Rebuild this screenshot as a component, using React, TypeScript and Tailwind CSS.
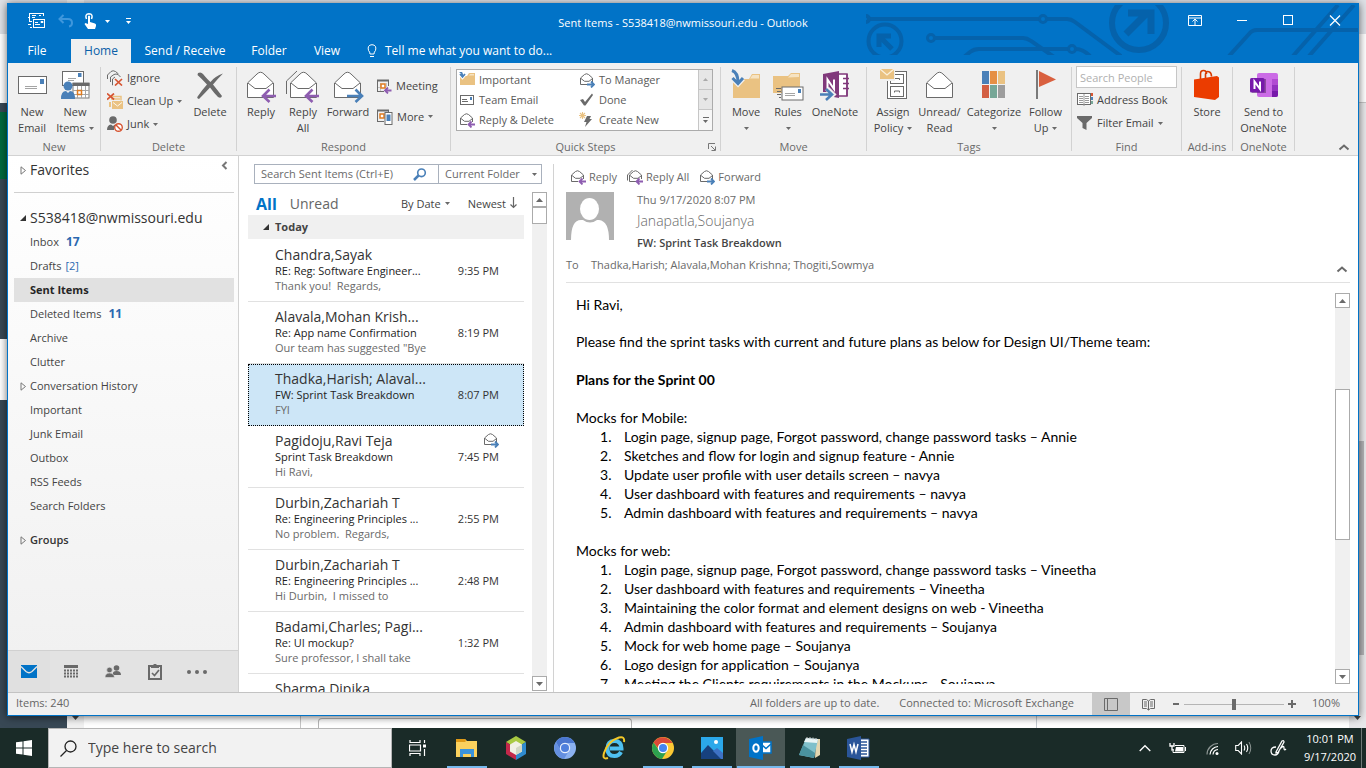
import React, { useState } from "react";

const CHAR = "#6a6a6a";
const BLUE = "#4a80b8";
const PURPLE = "#8e5db0";
const SAND = "#eac282";
const RED = "#d65532";

type IconProps = { w: number; h: number; className?: string; children: React.ReactNode };

function Icon({ w, h, className = "", children }: IconProps) {
  return (
    <svg width={w} height={h} viewBox={`0 0 ${w} ${h}`} fill="none" aria-hidden="true" className={`shrink-0 ${className}`}>
      {children}
    </svg>
  );
}

function Caret({ color = "#6a6a6a" }: { color?: string }) {
  return (
    <Icon w={5} h={3}>
      <path d="M0 0h5L2.500 3z" fill={color} />
    </Icon>
  );
}

/* ---------- large ribbon icons ---------- */

const envelopeShape = (
  <>
    <path d="M2.500 14 12 5q3.500-3.500 7 0l9.500 9v14.500h-26z" fill="#fff" stroke={CHAR} />
    <path d="m3 14 7 5.500h11l7-5.500" stroke={CHAR} />
  </>
);

const bigPurpleArrow = (
  <path d="M31 27H19M24.500 20.500 18 27l6.500 6" stroke={PURPLE} strokeWidth="2.600" />
);

function NewEmailIcon() {
  return (
    <Icon w={30} h={32}>
      <rect x="1.500" y="7.500" width="28" height="17" fill="#fff" stroke={CHAR} />
      <rect x="23" y="10" width="4" height="5" fill={BLUE} />
      <path d="M8 17.500h12M8 19.500h12" stroke="#a5a5a5" />
    </Icon>
  );
}

function NewItemsIcon() {
  return (
    <Icon w={30} h={32}>
      <rect x="2.500" y="2.500" width="21" height="14" fill="#fff" stroke={CHAR} />
      <rect x="18" y="4" width="3.500" height="4" fill={BLUE} />
      <path d="M8 9.500h8M8 11.500h6" stroke="#a5a5a5" />
      <rect x="13" y="14" width="16" height="15" fill="#fff" stroke="#7a7a7a" />
      <path d="M12.500 15.500h17" stroke={CHAR} strokeWidth="3" />
      <path d="M13 21.500h16M13 25.500h16M17.500 17v12M21.500 17v12M25.500 17v12" stroke="#a5a5a5" />
      <rect x="17.500" y="21.500" width="4" height="4" fill="#fff" stroke="#e07b1f" strokeWidth="1.500" />
      <circle cx="8" cy="17" r="4.500" fill={BLUE} />
      <path d="M1 30q0-8 5-8l2 2 2-2q5 0 5 8z" fill={BLUE} />
    </Icon>
  );
}

function DeleteIcon() {
  return (
    <Icon w={30} h={32}>
      <path d="M3 4q3-1.500 5 1 5 6 7.500 8Q20 7 28 4.500q-5 5-10 11 4 5 9 11.500-1 3-4 1-4-4-8-9.500Q10 24 4 30q-3-1-1-3 4-6 9-11.500Q7 10 2.500 6z" fill={CHAR} />
    </Icon>
  );
}

function ReplyIcon() {
  return (
    <Icon w={32} h={34}>
      {envelopeShape}
      {bigPurpleArrow}
    </Icon>
  );
}

function ReplyAllIcon() {
  return (
    <Icon w={34} h={34}>
      <path d="M.5 25V12L11 2" stroke={CHAR} />
      <g transform="translate(2 0)">
        {envelopeShape}
        {bigPurpleArrow}
      </g>
    </Icon>
  );
}

function ForwardIcon() {
  return (
    <Icon w={32} h={34}>
      {envelopeShape}
      <path d="M15 27h13M23.500 20.500 30 27l-6.500 6" stroke={BLUE} strokeWidth="2.600" />
    </Icon>
  );
}

function MoveIcon() {
  return (
    <Icon w={32} h={34}>
      <path d="M3 10h16l3-5h8v24H3z" fill={SAND} />
      <path d="M20 9.500 22.500 6H29v3.500z" fill="#f6e3c2" />
      <path d="M2 1q7 1 6 12M2.500 9.500 8 15l5-5.500" stroke="#f0f0f0" strokeWidth="5" />
      <path d="M2 1.500q6 2 6 12M2.500 9 8 14.500 13 9" stroke={BLUE} strokeWidth="3" />
    </Icon>
  );
}

function RulesIcon() {
  return (
    <Icon w={32} h={34}>
      <path d="M1 7h15l3-3h9v20H1z" fill={SAND} />
      <path d="M16 8.500 19 5h8v3z" fill="#f6e3c2" />
      <path d="M4 19.500h5M5 22.500h4M5 25.500h4M7 28.500h2" stroke={CHAR} />
      <rect x="10" y="18" width="21" height="13" fill="#fff" stroke={CHAR} />
      <rect x="26" y="20" width="3" height="4" fill={BLUE} />
      <path d="M13 24.500h10M13 26.500h10" stroke="#a5a5a5" />
    </Icon>
  );
}

function OneNoteIcon() {
  return (
    <Icon w={32} h={34}>
      <rect x="17" y="5" width="11" height="22" fill="#fff" stroke="#80397b" strokeWidth="1.500" />
      <path d="M24 9.500h6M24 14.500h6M24 19.500h6M28 5v22" stroke="#80397b" strokeWidth="1.500" />
      <path d="M4 5 20 2v27L4 26z" fill="#80397b" />
      <path d="M8.500 20v-9.500L15 20v-9.500" stroke="#fff" strokeWidth="2" />
      <path d="M1 25.500h12M8 19.500l6 6-6 5.500" stroke="#f0f0f0" strokeWidth="5" />
      <path d="M1 25.500h11M7 20l6 5.500L7 31" stroke={BLUE} strokeWidth="2.600" />
    </Icon>
  );
}

function AssignIcon() {
  return (
    <Icon w={32} h={34}>
      <rect x="10.500" y="2.500" width="19" height="27" fill="#fff" stroke={CHAR} />
      <rect x="13.500" y="5.500" width="13" height="9" stroke={CHAR} />
      <rect x="13.500" y="17.500" width="13" height="10" stroke={CHAR} />
      <path d="M17.500 11V9.500h5V11M17.500 23.500V22h5v1.500" stroke={CHAR} />
      <path d="M3 0h15v12H3z" fill="#f0f0f0" />
      <path d="M3 0h14v10H3z" fill={SAND} />
      <path d="m3 0 7 6 7-6" stroke="#fbf0dc" strokeWidth="1.300" />
    </Icon>
  );
}

function UnreadIcon() {
  return (
    <Icon w={32} h={32}>
      {envelopeShape}
    </Icon>
  );
}

function CategorizeIcon() {
  return (
    <Icon w={26} h={32}>
      <path d="M1 2h7v13H1z" fill={BLUE} />
      <path d="M9 2h7v13H9z" fill="#e58f44" />
      <path d="M17 2h7v13h-7z" fill={SAND} />
      <path d="M1 16h7v13H1z" fill="#d35f43" />
      <path d="M9 16h7v13H9z" fill="#76a797" />
      <path d="M17 16h7v13h-7z" fill="#9d9d9d" />
    </Icon>
  );
}

function FollowIcon() {
  return (
    <Icon w={22} h={32}>
      <path d="M2 1v29" stroke="#7a7a7a" strokeWidth="2" />
      <path d="m4 2 17 8.500L4 18z" fill="#d9603f" />
    </Icon>
  );
}

function StoreIcon() {
  return (
    <Icon w={28} h={34}>
      <path d="M7.500 11V5q0-3.500 3-3.500t3 3.500M12.500 9V5q1-3.500 4-2 2 1 2 4.500" stroke="#d83b01" strokeWidth="1.600" />
      <path d="M1 10.500 24 7l2 1.500V28l-4 3L1 28z" fill="#eb3c00" />
    </Icon>
  );
}

function SendOneNoteIcon() {
  return (
    <Icon w={32} h={34}>
      <rect x="9" y="4" width="21" height="24" rx="2" fill="#cb6be6" />
      <path d="M24 10h6v6h-6z" fill="#b14bd2" />
      <path d="M24 16h6v6h-6z" fill="#9332bf" />
      <path d="M24 22h6v4q0 2-2 2h-4z" fill="#7719aa" />
      <rect x="4" y="10" width="14" height="14" fill="#000" opacity=".3" />
      <rect x="2" y="9" width="14.500" height="14.500" rx="1.500" fill="#7719aa" />
      <path d="M6.500 20v-7.500l5.500 7.500v-7.500" stroke="#fff" strokeWidth="2" />
    </Icon>
  );
}

/* ---------- small icons ---------- */

function SmallEnvelope({ arrow, all = false }: { arrow: "reply" | "forward"; all?: boolean }) {
  return (
    <Icon w={16} h={16}>
      {all && <path d="M.5 11.500V6L5.500 1" stroke={CHAR} />}
      <path d="M8 12.500H1.500V6L5.500 2.500q2-1.500 4 0l4 3.500v4" stroke={CHAR} transform={all ? "translate(1 0)" : undefined} />
      <path d="m2 6.500 3.500 2.800h4.500l3.500-2.800" stroke={CHAR} transform={all ? "translate(1 0)" : undefined} />
      {arrow === "reply" ? (
        <path d="M16 12.500H9.500M12.500 9.500l-3 3 3 3" stroke={PURPLE} strokeWidth="1.800" />
      ) : (
        <path d="M8 12.500h7M12 9.500l3 3-3 3" stroke={BLUE} strokeWidth="1.800" />
      )}
    </Icon>
  );
}

function IgnoreIcon() {
  return (
    <Icon w={16} h={16}>
      <path d="M.5 9V5L4 1.500q2-1.500 4.500 0l3 2.500M3.500 12V7L7 4.500q2-1 4 0L13.500 7M6 15H5.500V9L8 7" stroke={CHAR} />
      <path d="m8 9 7 6.500M15 9l-7 6.500" stroke={RED} strokeWidth="1.700" />
    </Icon>
  );
}

function CleanUpIcon() {
  return (
    <Icon w={16} h={16}>
      <path d="M4 3.500h10v4M4 6h9" stroke={SAND} strokeWidth="1.500" />
      <path d="M5 8h11v8H5zM2 9h2v5H2z" fill={SAND} />
      <path d="m6 9.500 4.500 3.500L15 9.500" stroke="#fff8ea" />
      <path d="m0 .5 7 6M7 .5l-7 6" stroke={RED} strokeWidth="1.700" />
    </Icon>
  );
}

function JunkIcon() {
  return (
    <Icon w={16} h={16}>
      <circle cx="6" cy="4" r="3.800" fill={CHAR} />
      <path d="M0 14q0-5 4-5.500L6 10l2-1.500q1 0 2 1-3 1.500-3 4.500z" fill={CHAR} />
      <circle cx="11.500" cy="11.500" r="3.800" fill="#fff" stroke={RED} strokeWidth="1.400" />
      <path d="m9 9 5 5" stroke={RED} strokeWidth="1.400" />
    </Icon>
  );
}

function MeetingIcon() {
  return (
    <Icon w={16} h={16}>
      <path d="M1.500 2v11M12.500 2v6M1 13.500h7" stroke={CHAR} />
      <path d="M1 2.500h12" stroke={CHAR} strokeWidth="2" />
      <path d="M4.500 5v8M10.500 5v4M2 9.500h8" stroke="#c4c4c4" />
      <rect x="5" y="6" width="4" height="4" fill="#fff" stroke="#e07b1f" strokeWidth="1.500" />
      <path d="M15.500 12.500H9.500M12 9.500l-3 3 3 3" stroke={PURPLE} strokeWidth="1.800" />
    </Icon>
  );
}

function MoreIcon() {
  return (
    <Icon w={17} h={17}>
      <path d="M1.500 2v11M12.500 2v2M1 13.500h7" stroke={CHAR} />
      <path d="M1 2.500h12" stroke={CHAR} strokeWidth="2" />
      <rect x="4" y="6" width="4" height="4" fill="#fff" stroke="#e07b1f" strokeWidth="1.500" />
      <rect x="9" y="4.500" width="7" height="12" fill="#fff" stroke={CHAR} />
      <path d="M10.500 6.500h4V13h-4z" fill={BLUE} />
    </Icon>
  );
}

function FolderMoveIcon() {
  return (
    <Icon w={16} h={16}>
      <path d="M1 4h7l2-3h6v12H1z" fill={SAND} />
      <path d="M10 3.500 11 2h4v1.500z" fill="#f6e3c2" />
      <path d="M.5 0q3 0 3 5M1 2.500l2.500 3L6 2.500" stroke="#fff" strokeWidth="3" />
      <path d="M.5 0q3 0 3 4.500M1 2l2.500 3L6 2" stroke={BLUE} strokeWidth="1.700" />
    </Icon>
  );
}

function TeamEmailIcon() {
  return (
    <Icon w={16} h={16}>
      <rect x="1.500" y="3.500" width="13" height="9" fill="#fff" stroke={CHAR} />
      <path d="M11 5h2v3h-2z" fill={BLUE} />
      <path d="M3 7.500h5M3 9.500h6" stroke={CHAR} />
    </Icon>
  );
}

function DoneIcon() {
  return (
    <Icon w={16} h={16}>
      <path d="m1 8 3-1 2 3 7-8.500L14 3 6.500 13.500H5z" fill={CHAR} />
    </Icon>
  );
}

function BoltIcon() {
  return (
    <Icon w={16} h={16}>
      <path d="M3.500 0v7M0 3.500h7M1 1l5 5M6 1 1 6" stroke={SAND} strokeWidth="1.100" />
      <path d="M8 4h4l-1.500 3H13l-7 8 1.500-5H5z" fill={CHAR} />
    </Icon>
  );
}

function AddressBookIcon() {
  return (
    <Icon w={17} h={16}>
      <rect x="1.500" y="1.500" width="13" height="11" fill="#fff" stroke={CHAR} />
      <path d="M8 2v12M3 4.500h4M3 6.500h4M3 8.500h4M3 10.500h4M9 4.500h4M9 6.500h4M9 8.500h4M9 10.500h4" stroke="#9a9a9a" />
      <path d="M15 1h2v3h-2z" fill={RED} />
      <path d="M15 5h2v3h-2z" fill={BLUE} />
      <path d="M15 9h2v3h-2z" fill="#76a797" />
    </Icon>
  );
}

function FilterIcon() {
  return (
    <Icon w={17} h={16}>
      <path d="M1 1h15v2l-5.500 5v7L6.500 13V8L1 3z" fill={CHAR} />
    </Icon>
  );
}

function ChevronUp({ color = "#6a6a6a" }: { color?: string }) {
  return (
    <Icon w={12} h={8}>
      <path d="m1.500 6.500 4.500-4 4.500 4" stroke={color} strokeWidth="2" />
    </Icon>
  );
}

/* ---------- title bar ---------- */

function CircuitArt() {
  return (
    <svg width="492" height="50" viewBox="0 0 492 50" fill="none" aria-hidden="true" className="pointer-events-none absolute top-0.5 right-0 text-[#0562ab]">
      <g stroke="currentColor" strokeWidth="4">
        <path d="M3 14h170M181 14h20q4 0 8 3l46 34" />
        <circle cx="177" cy="14" r="3.500" strokeWidth="3" />
        <circle cx="0" cy="14" r="3" />
        <circle cx="19" cy="36" r="16.500" />
        <path d="M26 44 14 32M13 42V31h12" strokeWidth="5" />
        <circle cx="65" cy="33" r="3.500" strokeWidth="3" />
        <path d="M69 33h88q4 0 8 3l26 18M98 52l6-5q4-3 9-3h89M210 44q7 0 14 7" />
        <circle cx="206" cy="44" r="3.500" strokeWidth="3" />
        <circle cx="273" cy="18" r="27" strokeWidth="6" />
        <path d="m260 29 20-20M262 8h23v21" strokeWidth="7" />
        <path d="m363 51 20-22q3-4 8-4h104M427 51l45-51M443 51l45-51" />
      </g>
    </svg>
  );
}

function TitleBar() {
  return (
    <header className="relative bg-[#0173c7] text-white">
      <CircuitArt />
      <div className="relative grid h-9 grid-cols-[1fr_auto_1fr] items-center">
        <div className="flex items-center pl-5">
          <button aria-label="Send and receive all folders">
            <Icon w={18} h={18}>
              <path d="M2 1.500h14M1.500 1v8M1 9.500h3M0 5.500h1M15.500 1v3M4 3.500h4M4 5.500h3M11 3.500h2" stroke="#fff" />
              <rect x="5.500" y="7.500" width="11" height="8" stroke="#fff" />
              <path d="M7 10.500h3M7 12.500h5M13 9.500h2v1h-2zM0 12.500h3M2 15.500h2" stroke="#fff" />
            </Icon>
          </button>
          <button aria-label="Undo" className="ml-3">
            <Icon w={16} h={14}>
              <path d="M5.500 1 1.500 5l4 4M2 5h8q4 0 4 4 0 3-3 3.500" stroke="#3f97dc" strokeWidth="2" />
            </Icon>
          </button>
          <button aria-label="Touch mode" className="ml-2.5 flex items-center gap-2">
            <Icon w={13} h={16}>
              <path d="M2.500 6Q.5 1 5 .800 9.500 1 7.500 6" stroke="#fff" strokeWidth="1.500" />
              <path d="M4 3q1-1 2 0v6l5 1.500q1.500.500 1 2.500l-1 3H4L.5 11l1-1L4 11z" fill="#fff" />
            </Icon>
            <Caret color="#fff" />
          </button>
          <button aria-label="Customize Quick Access Toolbar" className="ml-4">
            <Icon w={6} h={6}>
              <path d="M0 .5h5" stroke="#fff" />
              <path d="M0 3h5L2.500 6z" fill="#fff" />
            </Icon>
          </button>
        </div>
        <h1 className="pt-1 text-[11px]">Sent Items - S538418@nwmissouri.edu - Outlook</h1>
        <div className="flex items-center justify-end gap-[35px] pr-[17px]">
          <button aria-label="Ribbon display options">
            <Icon w={14} h={12}>
              <path d="M.5.500h13v10H.5zM.5 3h13" stroke="#fff" />
              <path d="M7 10V4.500M4.500 6.500 7 4l2.500 2.500" stroke="#fff" />
            </Icon>
          </button>
          <button aria-label="Minimize">
            <Icon w={11} h={12}><path d="M0 5.500h10" stroke="#fff" /></Icon>
          </button>
          <button aria-label="Maximize">
            <Icon w={11} h={12}><rect x=".5" y=".5" width="9" height="9" stroke="#fff" /></Icon>
          </button>
          <button aria-label="Close">
            <Icon w={12} h={12}><path d="m1 .500 10 10M11 .500 1 10.500" stroke="#fff" strokeWidth="1.200" /></Icon>
          </button>
        </div>
      </div>
      <nav className="relative flex h-6 text-xs" aria-label="Ribbon tabs">
        <button className="w-[58px]">File</button>
        <button className="ml-[5px] w-[60px] bg-[#f0f0f0] text-[#0b5fa8]">Home</button>
        <button className="ml-2 w-[92px]">Send / Receive</button>
        <button className="ml-3 w-[52px]">Folder</button>
        <button className="ml-3 w-10">View</button>
        <button className="ml-5 flex items-center gap-2">
          <Icon w={10} h={14}>
            <path d="M3 10q0-2-1.500-3.500Q0 1 5 .700 10 1 8.500 6.500 7 8 7 10zM3 12.500h4" stroke="#fff" />
          </Icon>
          Tell me what you want to do...
        </button>
      </nav>
    </header>
  );
}

/* ---------- ribbon ---------- */

function Group({ label, width, children, extra }: { label: string; width: string; children: React.ReactNode; extra?: React.ReactNode }) {
  return (
    <>
      <section aria-label={label} className={`flex shrink-0 flex-col ${width}`}>
        <div className="flex flex-1 pt-1">{children}</div>
        <div className="relative h-4 text-center text-[11px] leading-4 text-[#6a6a6a]">
          {label}
          {extra}
        </div>
      </section>
      <span className="my-1 w-px shrink-0 bg-[#d2d2d2]" />
    </>
  );
}

function BigButton({ icon, lines, width, caret = false }: { icon: React.ReactNode; lines: string[]; width: string; caret?: boolean }) {
  return (
    <button className={`flex shrink-0 flex-col items-center pt-0.5 leading-4 whitespace-nowrap ${width}`}>
      <span className="mb-[3px] flex h-8 items-start justify-center">{icon}</span>
      <span>{lines[0]}</span>
      <span className="flex h-4 items-center gap-1">
        {lines[1]}
        {caret && <Caret />}
      </span>
    </button>
  );
}

function SmallButton({ icon, label, caret = false }: { icon: React.ReactNode; label: string; caret?: boolean }) {
  return (
    <button className="flex items-center gap-1 text-left leading-4 whitespace-nowrap">
      {icon}
      {label}
      {caret && <Caret />}
    </button>
  );
}

const quickSteps = [
  { label: "Important", icon: <FolderMoveIcon /> },
  { label: "To Manager", icon: <SmallEnvelope arrow="forward" /> },
  { label: "Team Email", icon: <TeamEmailIcon /> },
  { label: "Done", icon: <DoneIcon /> },
  { label: "Reply & Delete", icon: <SmallEnvelope arrow="reply" /> },
  { label: "Create New", icon: <BoltIcon /> },
];

function Ribbon() {
  return (
    <div className="flex h-[93px] shrink-0 border-b border-[#d2d2d2] bg-[#f0f0f0] text-[11px] text-[#444]">
      <Group label="New" width="w-[92px]">
        <BigButton width="w-12" icon={<NewEmailIcon />} lines={["New", "Email"]} />
        <BigButton width="w-[38px]" icon={<NewItemsIcon />} lines={["New", "Items"]} caret />
      </Group>
      <Group label="Delete" width="w-[135px]">
        <div className="flex w-[84px] flex-col gap-[7px] pt-[3px] pl-1.5">
          <SmallButton icon={<IgnoreIcon />} label="Ignore" />
          <SmallButton icon={<CleanUpIcon />} label="Clean Up" caret />
          <SmallButton icon={<JunkIcon />} label="Junk" caret />
        </div>
        <BigButton width="w-[50px]" icon={<DeleteIcon />} lines={["Delete"]} />
      </Group>
      <Group label="Respond" width="w-[213px]">
        <BigButton width="ml-[3px] w-[42px]" icon={<ReplyIcon />} lines={["Reply"]} />
        <BigButton width="w-[42px]" icon={<ReplyAllIcon />} lines={["Reply", "All"]} />
        <BigButton width="w-12" icon={<ForwardIcon />} lines={["Forward"]} />
        <div className="flex flex-col gap-[14px] pt-[11px] pl-1">
          <SmallButton icon={<MeetingIcon />} label="Meeting" />
          <SmallButton icon={<MoreIcon />} label="More" caret />
        </div>
      </Group>
      <Group
        label="Quick Steps"
        width="w-[269px]"
        extra={
          <button aria-label="Manage quick steps" className="absolute right-1 bottom-1">
            <Icon w={8} h={8}>
              <path d="M.5 6V.5H7M3 3l4 4M7.500 3.500v4h-4" stroke="#777" />
            </Icon>
          </button>
        }
      >
        <div className="mt-0.5 ml-[5px] flex h-[62px] w-[257px] border border-[#ababab] bg-white">
          <div className="grid flex-1 grid-cols-[120px_1fr]">
            {quickSteps.map((q) => (
              <button key={q.label} className="flex items-center gap-1 pl-0.5 text-[#5a5a5a]">
                {q.icon}
                {q.label}
              </button>
            ))}
          </div>
          <div className="grid w-[14px] grid-rows-3 divide-y divide-[#c6c6c6] border-l border-[#c6c6c6]">
            <button aria-label="Previous row" className="flex items-center justify-center bg-[#e6e6e6]">
              <Icon w={5} h={3}><path d="M0 3h5L2.500 0z" fill="#aaa" /></Icon>
            </button>
            <button aria-label="Next row" className="flex items-center justify-center bg-[#e6e6e6]">
              <Caret color="#aaa" />
            </button>
            <button aria-label="More quick steps" className="flex flex-col items-center justify-center gap-0.5 bg-[#f7f7f7]">
              <span className="h-px w-[6px] bg-[#6a6a6a]" />
              <Caret />
            </button>
          </div>
        </div>
      </Group>
      <Group label="Move" width="w-[145px]">
        <BigButton width="ml-[3px] w-11" icon={<MoveIcon />} lines={["Move"]} caret />
        <BigButton width="w-10" icon={<RulesIcon />} lines={["Rules"]} caret />
        <BigButton width="w-[54px]" icon={<OneNoteIcon />} lines={["OneNote"]} />
      </Group>
      <Group label="Tags" width="w-[204px]">
        <BigButton width="ml-[3px] w-[46px]" icon={<AssignIcon />} lines={["Assign", "Policy"]} caret />
        <BigButton width="w-[47px]" icon={<UnreadIcon />} lines={["Unread/", "Read"]} />
        <BigButton width="w-[62px]" icon={<CategorizeIcon />} lines={["Categorize"]} caret />
        <BigButton width="w-[41px]" icon={<FollowIcon />} lines={["Follow", "Up"]} caret />
      </Group>
      <Group label="Find" width="w-[109px]">
        <div className="-mt-px flex flex-col pl-1">
          <input aria-label="Search People" placeholder="Search People" className="mb-1 h-[22px] w-[101px] border border-[#c6c6c6] bg-white px-[3px] placeholder:text-[#b0b0b0]" />
          <div className="flex flex-col gap-[7px]">
            <SmallButton icon={<AddressBookIcon />} label="Address Book" />
            <SmallButton icon={<FilterIcon />} label="Filter Email" caret />
          </div>
        </div>
      </Group>
      <Group label="Add-ins" width="w-[50px]">
        <BigButton width="w-[50px]" icon={<StoreIcon />} lines={["Store"]} />
      </Group>
      <Group label="OneNote" width="w-[61px]">
        <BigButton width="w-[61px]" icon={<SendOneNoteIcon />} lines={["Send to", "OneNote"]} />
      </Group>
      <button aria-label="Collapse ribbon" className="mr-2 mb-1 ml-auto self-end">
        <ChevronUp />
      </button>
    </div>
  );
}

/* ---------- folder pane ---------- */

const folders: { name: string; count?: string; bold?: boolean; open?: boolean; selected?: boolean }[] = [
  { name: "Inbox", count: "17", bold: true },
  { name: "Drafts", count: "[2]" },
  { name: "Sent Items", selected: true },
  { name: "Deleted Items", count: "11", bold: true },
  { name: "Archive" },
  { name: "Clutter" },
  { name: "Conversation History", open: true },
  { name: "Important" },
  { name: "Junk Email" },
  { name: "Outbox" },
  { name: "RSS Feeds" },
  { name: "Search Folders" },
];

function Closed() {
  return (
    <Icon w={6} h={9}><path d="M1 .800v7.400l4.500-3.700z" stroke="#777" /></Icon>
  );
}

function Expanded() {
  return (
    <Icon w={6} h={6}><path d="M6 0v6H0z" fill="#333" /></Icon>
  );
}

function FolderPane() {
  return (
    <aside className="flex w-[231px] shrink-0 flex-col border-r border-[#d2d2d2] bg-gradient-to-b from-white to-[#f0f0f0] text-[#444]">
      <div className="flex-1 pr-1 pl-1.5">
        <div className="flex h-[37px] items-start border-b border-[#d0d0d0] pt-1 text-sm text-[#333]">
          <button className="flex items-center gap-1 pl-1.5 leading-5"><Closed />Favorites</button>
          <button aria-label="Minimize folder pane" className="mt-px mr-1.5 ml-auto">
            <Icon w={7} h={9}><path d="M5.500 1 2 4.500 5.500 8" stroke="#777" strokeWidth="2" /></Icon>
          </button>
        </div>
        <button className="mt-[13px] flex h-6 items-center gap-1 pl-1.5 text-sm text-[#333]"><Expanded />S538418@nwmissouri.edu</button>
        <ul className="text-[11px]">
          {folders.map((f) => (
            <li key={f.name}>
              <button className={f.selected ? "flex h-6 w-full items-center bg-[#e1e1e1] pl-1.5 font-bold text-[#262626]" : "flex h-6 w-full items-center pl-1.5"}>
                <span className="w-[10px]">{f.open && <Closed />}</span>
                {f.name}
                {f.count && <span className={f.bold ? "ml-[7px] text-xs font-bold text-[#2a68b0]" : "ml-1 text-[#2a68b0]"}>{f.count}</span>}
              </button>
            </li>
          ))}
        </ul>
        <button className="mt-2.5 flex h-6 items-center gap-1 pl-1.5 text-[11px] font-semibold text-[#333]"><Closed />Groups</button>
      </div>
      <div className="flex h-[42px] shrink-0 items-center border-t border-[#d0d0d0] bg-[#e3e3e3]">
        <button aria-label="Mail" className="flex h-full w-[42px] items-center justify-center bg-[#e0e0e0]">
          <Icon w={16} h={13}>
            <path d="M0 0h16v13H0z" fill="#0173c7" />
            <path d="m0 1.500 5 5q3 2.500 6 0l5-5" stroke="#e3e3e3" strokeWidth="1.300" />
          </Icon>
        </button>
        <button aria-label="Calendar" className="flex w-[42px] items-center justify-center">
          <Icon w={14} h={14}>
            <path d="M0 1.500h14" stroke={CHAR} strokeWidth="3" />
            <path d="M0 5.500h14M0 8.500h14M0 11.500h14" stroke={CHAR} strokeWidth="2" strokeDasharray="2 1" />
          </Icon>
        </button>
        <button aria-label="People" className="flex w-[42px] items-center justify-center">
          <Icon w={16} h={14}>
            <circle cx="11.500" cy="3" r="2.800" fill={CHAR} />
            <path d="M8 10q-1-4 3.500-4t4.500 4z" fill={CHAR} />
            <circle cx="4.500" cy="5" r="2.800" fill={CHAR} stroke="#e3e3e3" strokeWidth=".6" />
            <path d="M0 12.500q0-4.500 4.500-4.500t5 4.500z" fill={CHAR} stroke="#e3e3e3" strokeWidth=".6" />
          </Icon>
        </button>
        <button aria-label="Tasks" className="flex w-[42px] items-center justify-center">
          <Icon w={14} h={16}>
            <path d="M3 2H1v13h12V2h-2" stroke={CHAR} strokeWidth="2" />
            <path d="M3 1h2q2-2.500 4 0h2v3H3z" fill={CHAR} />
            <path d="m4 9 2.500 2.500 4.500-5.500" stroke={CHAR} strokeWidth="1.700" />
          </Icon>
        </button>
        <button aria-label="More" className="flex w-[42px] items-center justify-center">
          <Icon w={20} h={4}>
            <circle cx="2" cy="2" r="2" fill={CHAR} /><circle cx="10" cy="2" r="2" fill={CHAR} /><circle cx="18" cy="2" r="2" fill={CHAR} />
          </Icon>
        </button>
      </div>
    </aside>
  );
}

/* ---------- message list ---------- */

type Message = { from: string; subject?: string; preview?: string; time?: string; forwarded?: boolean };

const messages: Message[] = [
  { from: "Chandra,Sayak", subject: "RE: Reg: Software Engineer...", preview: "Thank you!  Regards,", time: "9:35 PM" },
  { from: "Alavala,Mohan Krish...", subject: "Re: App name Confirmation", preview: "Our team has suggested \"Bye", time: "8:19 PM" },
  { from: "Thadka,Harish; Alaval...", subject: "FW: Sprint Task Breakdown", preview: "FYI", time: "8:07 PM" },
  { from: "Pagidoju,Ravi Teja", subject: "Sprint Task Breakdown", preview: "Hi Ravi,", time: "7:45 PM", forwarded: true },
  { from: "Durbin,Zachariah T", subject: "Re: Engineering Principles ...", preview: "No problem.  Regards,", time: "2:55 PM" },
  { from: "Durbin,Zachariah T", subject: "RE: Engineering Principles ...", preview: "Hi Durbin,  I missed to", time: "2:48 PM" },
  { from: "Badami,Charles; Pagi...", subject: "Re: UI mockup?", preview: "Sure professor, I shall take", time: "1:32 PM" },
  { from: "Sharma,Dipika" },
];

function ScrollBar({ before, thumb }: { before: string; thumb: string }) {
  return (
    <div className="flex w-[15px] shrink-0 flex-col bg-[#f0f0f0]">
      <button aria-label="Scroll up" className="flex h-[15px] shrink-0 items-center justify-center border border-[#ababab] bg-white">
        <Icon w={7} h={4}><path d="M0 4h7L3.500 0z" fill={CHAR} /></Icon>
      </button>
      <span className={before} />
      <span className={`border border-[#ababab] bg-white ${thumb}`} />
      <button aria-label="Scroll down" className="mt-auto flex h-[15px] shrink-0 items-center justify-center border border-[#ababab] bg-white">
        <Icon w={7} h={4}><path d="M0 0h7L3.500 4z" fill={CHAR} /></Icon>
      </button>
    </div>
  );
}

function MessageList() {
  const [selected, setSelected] = useState(2);
  return (
    <section aria-label="Messages" className="flex w-[315px] shrink-0 flex-col pt-2">
      <div className="flex min-h-0 flex-1 flex-col border-r border-[#d2d2d2]">
        <div className="ml-[15px] flex h-5 w-[288px] shrink-0 border border-[#a9b1bd] text-[11px] text-[#6a6a6a]">
          <input aria-label="Search Sent Items" placeholder="Search Sent Items (Ctrl+E)" className="w-[158px] pl-1.5 placeholder:text-[#6a6a6a]" />
          <button aria-label="Search" className="flex flex-1 items-center">
            <Icon w={14} h={13}>
              <circle cx="8.500" cy="4.800" r="3.800" stroke={BLUE} strokeWidth="1.600" />
              <path d="M5.500 7.500 1 12" stroke={BLUE} strokeWidth="2.500" />
            </Icon>
          </button>
          <span className="flex w-[103px] items-center border-l border-[#a9b1bd] pr-1">
            <select aria-label="Search scope" className="w-full appearance-none bg-transparent pl-1.5">
              <option>Current Folder</option>
            </select>
            <Caret />
          </span>
        </div>
        <div className="flex min-h-0 flex-1 pt-2 pr-1.5 pl-[9px]">
          <div className="flex min-w-0 flex-1 flex-col overflow-hidden">
            <div className="flex h-[23px] shrink-0 items-center pl-2 text-sm">
              <button className="text-base font-bold text-[#0173c7]">All</button>
              <button className="ml-[13px] text-[#666]">Unread</button>
              <span className="ml-auto flex gap-[18px] pr-[7px] text-[11px] text-[#444]">
                <button className="flex items-center gap-1">By Date <Caret /></button>
                <button className="flex items-center gap-1">
                  Newest
                  <Icon w={7} h={12}><path d="M3.500 0v10M.5 7.500l3 3 3-3" stroke="#666" strokeWidth="1.200" /></Icon>
                </button>
              </span>
            </div>
            <h2 className="mb-px flex h-6 shrink-0 items-center gap-1.5 bg-[#f0f0f0] pl-[15px] text-[11px] font-bold text-[#444]"><Expanded />Today</h2>
            <ul className="min-h-0 flex-1 overflow-hidden">
              {messages.map((m, i) => (
                <li key={i} className={i === selected ? "h-[62px]" : "h-[62px] border-b border-[#e1e1e1]"}>
                  <button
                    onClick={() => setSelected(i)}
                    className={
                      i === selected
                        ? "flex h-full w-full border border-dotted border-black bg-[#cde6f7] pt-[5px] pr-6 pl-[26px] text-left"
                        : "flex h-full w-full pt-1.5 pr-[25px] pl-[27px] text-left"
                    }
                  >
                    <span className="flex min-w-0 flex-1 flex-col whitespace-pre">
                      <span className="text-sm leading-[17px] text-[#333]">{m.from}</span>
                      <span className="text-[11px] leading-[15px] text-[#222]">{m.subject}</span>
                      <span className="text-[11px] leading-[15px] text-[#6a6a6a]">{m.preview}</span>
                    </span>
                    <span className="flex flex-col items-end text-[11px] leading-[15px] text-[#333]">
                      <span className="h-[17px]">{m.forwarded && <SmallEnvelope arrow="forward" />}</span>
                      {m.time}
                    </span>
                  </button>
                </li>
              ))}
            </ul>
          </div>
          <div className="ml-2 flex pb-px"><ScrollBar before="h-0" thumb="h-[17px]" /></div>
        </div>
      </div>
    </section>
  );
}

/* ---------- reading pane ---------- */

const mobileTasks = [
  "Login page, signup page, Forgot password, change password tasks – Annie",
  "Sketches and flow for login and signup feature - Annie",
  "Update user profile with user details screen – navya",
  "User dashboard with features and requirements – navya",
  "Admin dashboard with features and requirements – navya",
];

const webTasks = [
  "Login page, signup page, Forgot password, change password tasks – Vineetha",
  "User dashboard with features and requirements – Vineetha",
  "Maintaining the color format and element designs on web - Vineetha",
  "Admin dashboard with features and requirements – Soujanya",
  "Mock for web home page – Soujanya",
  "Logo design for application – Soujanya",
  "Meeting the Clients requirements in the Mockups - Soujanya",
];

function TaskList({ items }: { items: string[] }) {
  return (
    <ol>
      {items.map((t, i) => (
        <li key={t} className="flex">
          <span className="w-12 shrink-0 pl-6">{i + 1}.</span>
          {t}
        </li>
      ))}
    </ol>
  );
}

function ReadingPane() {
  return (
    <article className="flex min-w-0 flex-1 flex-col pt-3 pr-2 pl-3 text-[#6a6a6a]">
      <div className="flex h-[18px] items-center gap-2.5 pl-1 text-[11px]">
        <button className="flex items-center gap-[3px]"><SmallEnvelope arrow="reply" />Reply</button>
        <button className="flex items-center gap-[3px]"><SmallEnvelope arrow="reply" all />Reply All</button>
        <button className="flex items-center gap-[3px]"><SmallEnvelope arrow="forward" />Forward</button>
      </div>
      <div className="mt-1.5 flex">
        <Icon w={48} h={48}>
          <path d="M0 0h48v48H0z" fill="#b1b1b1" />
          <ellipse cx="23.500" cy="17" rx="9.500" ry="11" fill="#fff" />
          <path d="M5 48q0-20 10-20h2q7 5 14 0h2q10 1 10 20z" fill="#fff" />
        </Icon>
        <div className="ml-[23px]">
          <p className="text-[11px] leading-[15px]">Thu 9/17/2020 8:07 PM</p>
          <p className="mt-1 text-sm leading-5 font-light">Janapatla,Soujanya</p>
          <h2 className="mt-1 text-[11px] leading-4 font-semibold text-[#444]">FW: Sprint Task Breakdown</h2>
        </div>
      </div>
      <div className="flex h-8 items-center border-b border-[#e1e1e1] pb-0.5 text-[11px] whitespace-pre">
        <span className="w-[25px]">To</span>
        <span>Thadka,Harish; Alavala,Mohan Krishna; Thogiti,Sowmya</span>
        <button aria-label="Collapse header" className="mt-1.5 mr-0.5 ml-auto"><ChevronUp /></button>
      </div>
      <div className="flex min-h-0 flex-1 pt-2.5 pb-2">
        <div className="min-w-0 flex-1 overflow-hidden pt-0.5 pl-2.5 font-[Lato,sans-serif] text-sm leading-[19px] text-black">
          <p className="mb-[18px]">Hi Ravi,</p>
          <p className="mb-[19px]">Please find the sprint tasks with current and future plans as below for Design UI/Theme team:</p>
          <p className="mb-[19px] font-bold">Plans for the Sprint 00</p>
          <p>Mocks for Mobile:</p>
          <TaskList items={mobileTasks} />
          <p className="mt-[19px]">Mocks for web:</p>
          <TaskList items={webTasks} />
        </div>
        <ScrollBar before="h-[81px]" thumb="h-[151px]" />
      </div>
    </article>
  );
}

/* ---------- status bar ---------- */

function StatusBar() {
  const [zoom, setZoom] = useState(50);
  return (
    <footer className="flex h-[23px] shrink-0 items-center border-t border-[#c3c3c3] bg-[#f0f0f0] pl-2 text-[11px] leading-[18px] text-[#666]">
      <span className="pb-0.5">Items: 240</span>
      <span className="ml-auto pb-0.5">All folders are up to date.</span>
      <span className="ml-5 pb-0.5">Connected to: Microsoft Exchange</span>
      <button aria-label="Normal view" className="ml-[18px] flex h-full w-[38px] items-center justify-center bg-[#c8c8c8]">
        <Icon w={14} h={13}><path d="M.5.500h13v12H.5zM3.500.500v12" stroke={CHAR} /></Icon>
      </button>
      <button aria-label="Reading view" className="ml-3">
        <Icon w={13} h={13}>
          <path d="M.5 1.500h4l2 1.500 2-1.500h4v9h-4l-2 1.500-2-1.500h-4zM6.500 3v9M2 4h3M2 6h3M2 8h3M8 4h3M8 6h3M8 8h3" stroke={CHAR} />
        </Icon>
      </button>
      <button aria-label="Zoom out" className="ml-[18px] h-0.5 w-[6px] bg-[#6a6a6a]" />
      <input
        type="range"
        aria-label="Zoom"
        value={zoom}
        onChange={(e) => setZoom(Number(e.target.value))}
        className="ml-[5px] h-3 w-[100px] appearance-none bg-[linear-gradient(#b5b5b5,#b5b5b5)] bg-[length:100%_1px] bg-center bg-no-repeat [&::-webkit-slider-thumb]:h-[11px] [&::-webkit-slider-thumb]:w-1 [&::-webkit-slider-thumb]:appearance-none [&::-webkit-slider-thumb]:bg-[#6a6a6a]"
      />
      <button aria-label="Zoom in" className="ml-1">
        <Icon w={8} h={8}><path d="M0 4h8M4 0v8" stroke={CHAR} strokeWidth="2" /></Icon>
      </button>
      <span className="mr-[18px] ml-4 pb-0.5">{zoom * 2}%</span>
    </footer>
  );
}

/* ---------- taskbar ---------- */

const apps: { name: string; bar?: string; active?: boolean; icon: React.ReactNode }[] = [
  {
    name: "Task View",
    icon: (
      <Icon w={17} h={16}>
        <path d="M1 0v2.500h10V0M1 16v-2.500h10V16M.5 5h11v6H.5zM15.500 0v3M15.500 9v7" stroke="#fff" strokeWidth="1.200" />
        <path d="M14 4.500h3v3h-3z" fill="#fff" />
      </Icon>
    ),
  },
  {
    name: "File Explorer",
    bar: "w-10",
    icon: (
      <Icon w={22} h={20}>
        <path d="M0 1h9l2 2h10v16H0z" fill="#fbd15e" />
        <path d="M0 1h9l1 2-1 1H0z" fill="#e09a17" />
        <path d="M4 11h14v8h-3v-3H7v3H4z" fill="#3a93dc" />
      </Icon>
    ),
  },
  {
    name: "NetBeans",
    icon: (
      <Icon w={22} h={24}>
        <path d="M11 0 21 6 11 12 1 6z" fill="#a9ca42" />
        <path d="m1 6 10 6v12L1 18z" fill="#c4284a" />
        <path d="M21 6 11 12v12l10-6z" fill="#2f8bcf" />
        <path d="m11 5 6 3.500v7L11 19l-6-3.500v-7z" fill="#f1f1e4" />
        <path d="M11 12v7l6-3.500v-7z" fill="#d3d8c4" />
      </Icon>
    ),
  },
  {
    name: "Chromium",
    icon: (
      <Icon w={22} h={22}>
        <circle cx="11" cy="11" r="11" fill="#8bb1f0" />
        <path d="M11 0a11 11 0 0 1 9.700 6H11a5 5 0 0 0-4.500 7.500L2 5A11 11 0 0 1 11 0z" fill="#4a76cf" />
        <path d="M2 5a11 11 0 0 0 8 17l4.500-7.500-8-1z" fill="#6590e0" />
        <circle cx="11" cy="11" r="5.200" fill="#e9f0fc" />
        <circle cx="11" cy="11" r="4" fill="#4f80dd" />
      </Icon>
    ),
  },
  {
    name: "Internet Explorer",
    icon: (
      <Icon w={24} h={24}>
        <path d="M19 16q-2 4-6.500 4-7 0-7-7.500t7-7.500q7 0 7 7.500H8" stroke="#4fc0f0" strokeWidth="4" />
        <path d="M22 6q1-6-5-4.500Q6 5 2 17q-2 7 4 5" stroke="#f5c928" strokeWidth="2" />
      </Icon>
    ),
  },
  {
    name: "Chrome",
    bar: "w-10",
    icon: (
      <Icon w={22} h={22}>
        <circle cx="11" cy="11" r="11" fill="#fcc934" />
        <path d="M1.500 5.500A11 11 0 0 1 20.500 6H11q-4 0-5 5z" fill="#db4a38" />
        <path d="M1.500 5.500A11 11 0 0 0 10 22l5-8-8-1z" fill="#2da14f" />
        <circle cx="11" cy="11" r="5.200" fill="#fff" />
        <circle cx="11" cy="11" r="4" fill="#4685f0" />
      </Icon>
    ),
  },
  {
    name: "Photos",
    bar: "w-10",
    icon: (
      <Icon w={22} h={22}>
        <path d="M0 0h22v22H0z" fill="#2ba8ea" />
        <path d="m0 16 7-8 14 14H0z" fill="#17417e" />
        <path d="m12 14 4-3 6 5v6h-2z" fill="#3e72c4" />
        <circle cx="15" cy="5" r="2" fill="#fff" />
      </Icon>
    ),
  },
  {
    name: "Outlook",
    bar: "w-12",
    active: true,
    icon: (
      <Icon w={23} h={24}>
        <path d="M13 6h9v11h-9z" fill="#fff" stroke="#0173c7" strokeWidth="1.500" />
        <path d="m13 9 4 3.500L22 8" stroke="#0173c7" strokeWidth="1.500" />
        <path d="m0 3 14-3v24L0 21z" fill="#0173c7" />
        <ellipse cx="7" cy="12" rx="2.700" ry="3.800" stroke="#fff" strokeWidth="2" />
      </Icon>
    ),
  },
  {
    name: "Notepad",
    bar: "w-10",
    icon: (
      <Icon w={23} h={22}>
        <path d="m18 2 4 0v16l-5 3z" fill="#e3d6b0" />
        <path d="M8 1 20 2l-4 19L1 18z" fill="#7fc0cb" />
        <path d="m8 1 12 1-1 4L6 5z" fill="#e9f5f6" />
        <path d="M5 8 17 16l-1 5L1 18z" fill="#4a929f" />
        <path d="M9 0v2M12 0v2M15 .500v2M18 1v2" stroke="#c9c9c9" />
      </Icon>
    ),
  },
  {
    name: "Word",
    bar: "w-10",
    icon: (
      <Icon w={23} h={24}>
        <path d="M13 3h9v18h-9z" fill="#fff" stroke="#2a5599" />
        <path d="M14 6h6M14 9h6M14 12h6M14 15h6M14 18h6" stroke="#2a5599" strokeWidth="1.300" />
        <path d="m0 3 14-3v24L0 21z" fill="#2a5599" />
        <path d="m3 8 2 8 2-7.500L9 16l2-8" stroke="#fff" strokeWidth="1.500" />
      </Icon>
    ),
  },
];

function TaskBar() {
  return (
    <footer className="relative flex h-10 shrink-0 items-stretch bg-[#1a2b28] text-white">
      <button aria-label="Start" className="flex w-12 items-center justify-center">
        <Icon w={16} h={16}>
          <path d="M0 2.300 6.500 1.400v6.100H0zM7.500 1.200 16 0v7.500H7.500zM0 8.500h6.500v6.100L0 13.700zM7.500 8.500H16V16l-8.500-1.200z" fill="#fff" />
        </Icon>
      </button>
      <label className="mr-px flex w-[344px] items-center border border-[#b5b5b5] bg-[#f2f2f2] pl-[11px]">
        <Icon w={17} h={17}>
          <circle cx="10.500" cy="6.500" r="5.500" stroke="#222" strokeWidth="1.300" />
          <path d="M6.500 10.500.5 16.500" stroke="#222" strokeWidth="1.300" />
        </Icon>
        <input aria-label="Type here to search" placeholder="Type here to search" className="ml-[11px] min-w-0 flex-1 text-sm placeholder:text-[#444]" />
      </label>
      {apps.map((a) => (
        <button
          key={a.name}
          aria-label={a.name}
          className={a.active ? "flex w-[49px] flex-col items-center bg-[#4a5856]" : "flex w-[49px] flex-col items-center"}
        >
          <span className="flex flex-1 items-center">{a.icon}</span>
          {a.bar && <span className={`-mt-0.5 h-0.5 bg-[#76b9ed] ${a.bar}`} />}
        </button>
      ))}
      <div className="ml-auto flex items-center pr-1">
        <button aria-label="Show hidden icons">
          <Icon w={12} h={8}><path d="m.7 7 5.300-5.300L11.300 7" stroke="#fff" strokeWidth="1.300" /></Icon>
        </button>
        <button aria-label="Battery" className="ml-[18px]">
          <Icon w={17} h={13}>
            <path d="M1 1v3h4V1M3 4v4h2" stroke="#fff" strokeWidth="1.300" />
            <path d="M6 3.500h9v7H4V9M16.500 5v4" stroke="#fff" />
            <path d="M7 5h7v4.500H6z" fill="#fff" />
          </Icon>
        </button>
        <button aria-label="Network" className="ml-5">
          <Icon w={13} h={13}>
            <path d="M1 12.500A11 11 0 0 1 12 1.500" stroke="#8b9492" strokeWidth="1.200" />
            <path d="M4 12.500A8.500 8.500 0 0 1 12 4.500M7 12.500A5.500 5.500 0 0 1 12 7.500" stroke="#fff" strokeWidth="1.200" />
            <circle cx="11" cy="11.500" r="1.500" fill="#fff" />
          </Icon>
        </button>
        <button aria-label="Volume" className="ml-4">
          <Icon w={17} h={14}>
            <path d="M.7 4.500h2.500L6.500 1v12L3.200 9.500H.7zM9 4.500q1.500 2.500 0 5M11.500 3q2.500 4 0 8" stroke="#fff" strokeWidth="1.100" />
            <path d="M14 1q3.500 6 0 12" stroke="#8b9492" />
          </Icon>
        </button>
        <button aria-label="Pen workspace" className="ml-[18px]">
          <Icon w={17} h={17}>
            <path d="M6 7Q1 7 1 11t4 4q3 0 4-4M6 12 12 1q2-1 2 1L8 12.500 6 13zM11 8q3-3 3 0t2 1" stroke="#fff" strokeWidth="1.300" />
          </Icon>
        </button>
        <div className="ml-[14px] w-[58px] text-center text-[11px] leading-[18px]">
          <p>10:01 PM</p>
          <p>9/17/2020</p>
        </div>
        <span className="ml-0.5 h-10 w-px bg-[#6e7977]" />
      </div>
    </footer>
  );
}

/* ---------- browser window left open behind Outlook ---------- */

function Backdrop() {
  return (
    <div aria-hidden="true" className="absolute inset-0 flex bg-white">
      <div className="flex w-[67px] flex-col bg-[#384855]">
        <span className="h-[34px] bg-[#dee1e6]" />
        <span className="h-[69px] bg-white" />
        <span className="h-[9px] bg-[#384855]" />
        <span className="h-[67px] bg-[#00693e]" />
        <span className="h-[160px]" />
        <span className="h-[61px] bg-white" />
      </div>
      <div className="flex w-[17px] items-end justify-center bg-[#f1f1f1] pb-2"><Icon w={7} h={4}><path d="M0 0h7L3.500 4z" fill="#444" /></Icon></div>
      <div className="flex min-w-0 flex-1 flex-col">
        <span className="h-[34px] bg-[#dee1e6]" />
        <div className="flex flex-1 items-end">
          <span className="h-full w-[217px] border-r border-[#c6c6c6]" />
          <span className="mx-[17px] h-[10px] w-[314px] rounded-t border border-b-0 border-[#b5b5b5]" />
          <span className="h-full w-[388px] border-r border-[#c3cad1]" />
        </div>
      </div>
      <div className="flex w-[17px] flex-col bg-[#e8e8ea]">
        <span className="h-[34px] bg-[#dee1e6]" />
        <span className="h-[69px] border-b border-[#c6c6c6] bg-white" />
        <span className="mt-[338px] mr-0.5 h-[214px] bg-[#b5b5b8]" />
        <span className="mt-auto flex justify-center pb-2"><Icon w={7} h={4}><path d="M0 0h7L3.500 4z" fill="#444" /></Icon></span>
      </div>
    </div>
  );
}

export default function App() {
  return (
    <div className="flex h-screen flex-col overflow-hidden font-['Open_Sans',sans-serif]">
      <div className="relative flex min-h-0 flex-1 pt-[3px] pr-[7px] pb-3 pl-[7px]">
        <Backdrop />
        <main className="relative flex min-w-0 flex-1 flex-col border border-t-0 border-[#0173c7] bg-white shadow-[0_1px_8px_rgba(0,0,0,0.6)]">
          <TitleBar />
          <Ribbon />
          <div className="flex min-h-0 flex-1">
            <FolderPane />
            <MessageList />
            <ReadingPane />
          </div>
          <StatusBar />
        </main>
      </div>
      <TaskBar />
    </div>
  );
}
